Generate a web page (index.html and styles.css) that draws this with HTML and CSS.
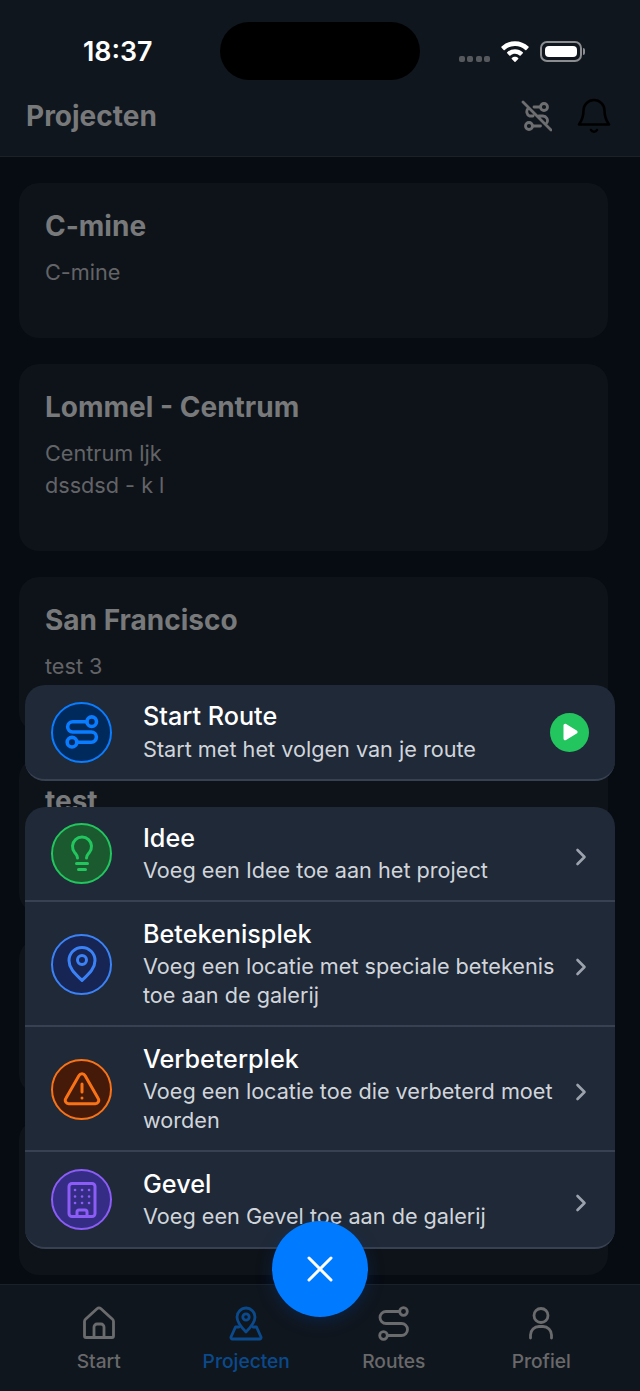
FILE: index.html
```html
<!DOCTYPE html>
<html lang="nl">
<head>
<meta charset="utf-8">
<title>Projecten</title>
<link rel="stylesheet" href="styles.css">
</head>
<body>
<div class="screen">
  <header class="topbar">
    <div class="status">
      <span class="clock">18:37</span>
      <span class="island"></span>
      <span class="status-icons">
        <span class="signal"><i></i><i></i><i></i><i></i></span>
        <svg class="wifi" width="28" height="21" viewBox="1.800 2 22.400 17"><path d="M13 2.200c4.200 0 8 1.600 10.900 4.300.3.300.3.600 0 .9l-1.700 1.800c-.3.300-.6.300-.9 0A12 12 0 0 0 13 6a12 12 0 0 0-8.300 3.200c-.3.300-.6.300-.9 0L2.100 7.400c-.3-.3-.3-.6 0-.9A16 16 0 0 1 13 2.200zM13 8.600c2.400 0 4.600.9 6.300 2.500.3.300.3.600 0 .9l-1.700 1.800c-.3.300-.6.300-.9 0A5.500 5.500 0 0 0 13 12.400c-1.400 0-2.700.5-3.700 1.400-.3.300-.6.300-.9 0L6.700 12c-.3-.3-.3-.6 0-.9A9.200 9.200 0 0 1 13 8.600zM13 14.800c1 0 1.900.4 2.600 1 .2.200.2.500 0 .7l-2.200 2.300c-.2.200-.6.200-.8 0l-2.200-2.300c-.2-.2-.2-.5 0-.7.700-.6 1.600-1 2.600-1z" fill="#fff"/></svg>
        <span class="battery"><span class="battery-fill"></span></span>
      </span>
    </div>
    <div class="titlebar">
      <h1 class="page-title">Projecten</h1>
      <div class="top-actions">
        <svg width="32" height="32" viewBox="0 0 32 32" fill="none" stroke="#6d6e70" stroke-width="2.800" stroke-linecap="round" stroke-linejoin="round"><circle cx="24" cy="7" r="3.500"/><circle cx="9" cy="26" r="3.500"/><path d="M20.500 7H14M8 8.500a4.800 4.800 0 0 0 1.500 7.500H13M19 16h4a4.500 4.500 0 0 1 4 6.500M12.500 26h8M3 2l28 28"/></svg>
        <svg width="36" height="38" viewBox="0 0 36 38" fill="none" stroke="#000" stroke-width="2.600" stroke-linecap="round" stroke-linejoin="round"><path d="M18 3a10.500 10.500 0 0 0-10.500 10.500c0 8-2.500 11-4.500 14h30c-2-3-4.500-6-4.500-14A10.500 10.500 0 0 0 18 3z"/><path d="M15 33a3.400 3.400 0 0 0 6 0"/></svg>
      </div>
    </div>
  </header>

  <main class="projects">
    <article class="card"><h2>C-mine</h2><p>C-mine</p></article>
    <article class="card card-tall"><h2>Lommel - Centrum</h2><p>Centrum ljk<br>dssdsd - k l</p></article>
    <article class="card"><h2>San Francisco</h2><p>test 3</p></article>
    <article class="card"><h2>test</h2><p>test</p></article>
    <article class="card"><h2>Genk</h2><p>test</p></article>
    <article class="card"><h2>Hasselt</h2><p>test</p></article>
  </main>

  <nav class="tabbar">
    <a class="tab">
      <svg width="36" height="36" viewBox="0 0 36 36" fill="none" stroke="#6a6b6d" stroke-width="2.800" stroke-linecap="round" stroke-linejoin="round"><path d="M5 31.500h26a1.500 1.500 0 0 0 1.500-1.500V15.500a3 3 0 0 0-1-2.200L20 2.800a3 3 0 0 0-4 0L4.500 13.300a3 3 0 0 0-1 2.200V30A1.500 1.500 0 0 0 5 31.500z"/><path d="M13 31.500V21a3 3 0 0 1 3-3h4a3 3 0 0 1 3 3v10.500"/></svg>
      <span>Start</span>
    </a>
    <a class="tab tab-active">
      <svg width="36" height="36" viewBox="0 0 36 36" fill="none" stroke="#0a4a8c" stroke-width="2.800" stroke-linecap="round" stroke-linejoin="round"><path d="M18 26C14 22 9 17 9 11a9 9 0 0 1 18 0c0 6-5 11-9 15z"/><circle cx="18" cy="11" r="3.200"/><path d="M11 21H7.500L3 31a1.500 1.500 0 0 0 1.400 2h27.200a1.500 1.500 0 0 0 1.400-2l-4.500-10H25"/></svg>
      <span>Projecten</span>
    </a>
    <a class="tab">
      <svg width="36" height="36" viewBox="0 0 36 36" fill="none" stroke="#6a6b6d" stroke-width="2.800" stroke-linecap="round" stroke-linejoin="round"><circle cx="27.500" cy="5.500" r="3.800"/><circle cx="7.500" cy="29.500" r="3.800"/><path d="M23.500 5.500H10a6 6 0 0 0 0 12h15.500a6 6 0 0 1 0 12H11.500"/></svg>
      <span>Routes</span>
    </a>
    <a class="tab">
      <svg width="36" height="36" viewBox="0 0 36 36" fill="none" stroke="#6a6b6d" stroke-width="2.800" stroke-linecap="round" stroke-linejoin="round"><circle cx="18" cy="9.500" r="7"/><path d="M7.500 32v-3a8.500 8.500 0 0 1 8.500-8.500h4a8.500 8.500 0 0 1 8.500 8.500v3"/></svg>
      <span>Profiel</span>
    </a>
  </nav>

  <section class="sheet">
    <div class="panel">
      <div class="row row-start">
        <span class="badge badge-blue">
          <svg width="36" height="36" viewBox="0 0 36 36" fill="none" stroke="#0a7cff" stroke-width="3.600" stroke-linecap="round" stroke-linejoin="round"><circle cx="27.700" cy="7.700" r="4.800"/><circle cx="8" cy="28.200" r="4.800"/><path d="M22.900 7.700H8.800a5.150 5.150 0 0 0 0 10.300h18.500a5.100 5.100 0 0 1 0 10.200H12.800"/></svg>
        </span>
        <div class="row-text"><h3>Start Route</h3><p>Start met het volgen van je route</p></div>
        <span class="play"><svg width="20" height="20" viewBox="0 0 20 20"><path d="M3.500 3.500c0-1.500 1.300-2.300 2.600-1.500l10.600 6.400c1.200.7 1.200 2.500 0 3.200L6.100 18c-1.300.8-2.600 0-2.600-1.500z" fill="#fff"/></svg></span>
      </div>
    </div>
    <div class="panel">
      <div class="row row-short">
        <span class="badge badge-green">
          <svg width="36" height="44" viewBox="0 0 36 44" fill="none" stroke="#22c55e" stroke-width="3" stroke-linecap="round" stroke-linejoin="round"><path d="M13.500 26c0-2.500-1.200-3.500-2.800-5.400a9.500 9.500 0 1 1 14.600 0c-1.600 1.900-2.800 2.900-2.800 5.400"/><path d="M12.500 31.500h11M14.500 37.500h7"/></svg>
        </span>
        <div class="row-text"><h3>Idee</h3><p>Voeg een Idee toe aan het project</p></div>
        <svg class="chevron" width="12" height="18" viewBox="0 0 12 18" fill="none" stroke="#9ca3af" stroke-width="2.600" stroke-linecap="round" stroke-linejoin="round"><path d="M2.500 2l7 7-7 7"/></svg>
      </div>
      <div class="row">
        <span class="badge badge-sky">
          <svg width="36" height="40" viewBox="0 0 36 40" fill="none" stroke="#3b82f6" stroke-width="3" stroke-linecap="round" stroke-linejoin="round"><path d="M18 36.500C12 30.500 5 25 5 16.500a13 13 0 0 1 26 0C31 25 24 30.500 18 36.500z"/><circle cx="18" cy="16" r="4.500"/></svg>
        </span>
        <div class="row-text"><h3>Betekenisplek</h3><p>Voeg een locatie met speciale betekenis toe aan de galerij</p></div>
        <svg class="chevron" width="12" height="18" viewBox="0 0 12 18" fill="none" stroke="#9ca3af" stroke-width="2.600" stroke-linecap="round" stroke-linejoin="round"><path d="M2.500 2l7 7-7 7"/></svg>
      </div>
      <div class="row">
        <span class="badge badge-orange">
          <svg width="38" height="36" viewBox="0 0 38 36" fill="none" stroke="#f97316" stroke-width="3" stroke-linecap="round" stroke-linejoin="round"><path d="M16 4.500L2.800 27.500a3.400 3.400 0 0 0 3 5.200h26.400a3.400 3.400 0 0 0 3-5.200L22 4.500a3.400 3.400 0 0 0-6 0z"/><path d="M19 13v8M19 27v.1"/></svg>
        </span>
        <div class="row-text"><h3>Verbeterplek</h3><p>Voeg een locatie toe die verbeterd moet worden</p></div>
        <svg class="chevron" width="12" height="18" viewBox="0 0 12 18" fill="none" stroke="#9ca3af" stroke-width="2.600" stroke-linecap="round" stroke-linejoin="round"><path d="M2.500 2l7 7-7 7"/></svg>
      </div>
      <div class="row row-short">
        <span class="badge badge-violet">
          <svg width="36" height="40" viewBox="0 0 36 40" fill="none" stroke="#8b5cf6" stroke-width="3" stroke-linecap="round" stroke-linejoin="round"><rect x="5" y="3.500" width="26" height="33" rx="3"/><path d="M13 36.500V32a2 2 0 0 1 2-2h6a2 2 0 0 1 2 2v4.500"/><path d="M11 10h.1M18 10h.1M25 10h.1M11 16.500h.1M18 16.500h.1M25 16.500h.1M11 23h.1M18 23h.1M25 23h.1" stroke-width="2.600"/></svg>
        </span>
        <div class="row-text"><h3>Gevel</h3><p>Voeg een Gevel toe aan de galerij</p></div>
        <svg class="chevron" width="12" height="18" viewBox="0 0 12 18" fill="none" stroke="#9ca3af" stroke-width="2.600" stroke-linecap="round" stroke-linejoin="round"><path d="M2.500 2l7 7-7 7"/></svg>
      </div>
    </div>
  </section>

  <button class="fab" type="button" aria-label="Sluiten">
    <svg width="30" height="30" viewBox="0 0 30 30" fill="none" stroke="#fff" stroke-width="3" stroke-linecap="round"><path d="M4 4l22 22M26 4L4 26"/></svg>
  </button>
</div>
</body>
</html>
```

FILE: styles.css
```css
* { box-sizing: border-box; margin: 0; padding: 0; }

html, body { background: #070b12; }

body {
  width: 640px;
  height: 1391px;
  overflow: hidden;
  font-family: Inter, "Liberation Sans", sans-serif;
}

.screen {
  position: relative;
  width: 640px;
  height: 1391px;
  display: flex;
  flex-direction: column;
  background: #070b12;
  overflow: hidden;
}

/* top bar */
.topbar {
  flex: none;
  height: 157px;
  background: #10161e;
  border-bottom: 1px solid #1b2129;
}

.status {
  height: 84px;
  padding: 22px 58px 0 83px;
  display: flex;
  align-items: flex-start;
}

.clock {
  width: 137px;
  font-size: 26.800px;
  line-height: 58px;
  font-weight: 600;
  color: #fff;
}

.island {
  width: 200px;
  height: 58px;
  border-radius: 29px;
  background: #000;
}

.status-icons {
  margin-left: auto;
  height: 58px;
  display: flex;
  align-items: center;
  gap: 11px;
}

.signal { display: flex; gap: 2.300px; margin-top: 16px; }
.signal i { width: 6px; height: 6px; border-radius: 2px; background: #55585d; }

.battery {
  position: relative;
  width: 42px;
  height: 21px;
  padding: 3px;
  border: 2px solid #8b8d90;
  border-radius: 7px;
}

.battery::after {
  content: "";
  position: absolute;
  right: -5px;
  top: 5px;
  width: 2px;
  height: 7px;
  border-radius: 0 2px 2px 0;
  background: #8b8d90;
}

.battery-fill {
  display: block;
  width: 100%;
  height: 100%;
  border-radius: 4px;
  background: #fff;
}

.titlebar {
  height: 64px;
  padding: 0 28px 0 26px;
  display: flex;
  align-items: center;
  justify-content: space-between;
}

.page-title {
  font-size: 28px;
  font-weight: 700;
  color: #78797b;
}

.top-actions { display: flex; align-items: center; gap: 24px; }

/* project list */
.projects {
  flex: 1;
  min-height: 0;
  padding: 26px 32px 0 19px;
  display: flex;
  flex-direction: column;
  gap: 26px;
  overflow: hidden;
}

.card {
  flex: none;
  height: 155px;
  background: #0e1319;
  border-radius: 20px;
  padding: 25px 26px 0;
}

.card-tall { height: 187px; }

.card h2 {
  font-size: 28px;
  line-height: 36px;
  font-weight: 700;
  color: #78797b;
}

.card p {
  margin-top: 12px;
  font-size: 21.650px;
  line-height: 32px;
  color: #636467;
}

/* bottom navigation */
.tabbar {
  flex: none;
  height: 107px;
  padding: 21px 24px 0 25px;
  display: grid;
  grid-template-columns: repeat(4, 147.500px);
  background: #10161e;
  border-top: 1px solid #1b2129;
}

.tab {
  display: flex;
  flex-direction: column;
  align-items: center;
  gap: 7px;
  font-size: 19.200px;
  line-height: 24px;
  font-weight: 500;
  color: #69696b;
}

.tab-active { color: #0a4a8c; }

/* action sheet */
.sheet {
  position: absolute;
  left: 25px;
  top: 685px;
  width: 590px;
  display: flex;
  flex-direction: column;
  gap: 26px;
}

.panel {
  background: #1f2937;
  border-radius: 20px;
  border-bottom: 2px solid #374151;
  overflow: hidden;
}

.row {
  min-height: 125px;
  padding: 12px 28px 11px 26px;
  display: flex;
  align-items: center;
  border-bottom: 2px solid #374151;
}

.row:last-child { border-bottom: 0; }

.row-start { min-height: 94px; padding: 0 26px; border-bottom: 0; }
.row-short { min-height: 95px; padding-top: 0; padding-bottom: 0; }

.badge {
  flex: none;
  width: 61px;
  height: 61px;
  margin-right: 31px;
  border-radius: 50%;
  border: 2px solid;
  display: flex;
  align-items: center;
  justify-content: center;
}

.badge-blue { background: #002a5c; border-color: #0a7cff; }
.badge-green { background: #1a5a2e; border-color: #22c55e; }
.badge-sky { background: #172554; border-color: #3b82f6; }
.badge-orange { background: #461a08; border-color: #f97316; }
.badge-violet { background: #352c85; border-color: #8b5cf6; }

.badge svg { flex: none; }

.row-text { flex: 1; min-width: 0; }

.row-text h3 {
  font-size: 25.200px;
  line-height: 32px;
  font-weight: 500;
  color: #fff;
}

.row-text p {
  margin-top: 2.500px;
  font-size: 21.650px;
  line-height: 29px;
  color: #d1d5db;
}

.chevron { flex: none; margin: 6px 0 0 16px; }

.play {
  flex: none;
  width: 39px;
  height: 39px;
  border-radius: 50%;
  background: #22c55e;
  display: flex;
  align-items: center;
  justify-content: center;
}

.fab {
  position: absolute;
  left: 272px;
  top: 1221px;
  width: 96px;
  height: 96px;
  border: 0;
  border-radius: 50%;
  background: #007aff;
  display: flex;
  align-items: center;
  justify-content: center;
  box-shadow: 0 4px 16px rgba(0, 60, 140, 0.35);
}
```
